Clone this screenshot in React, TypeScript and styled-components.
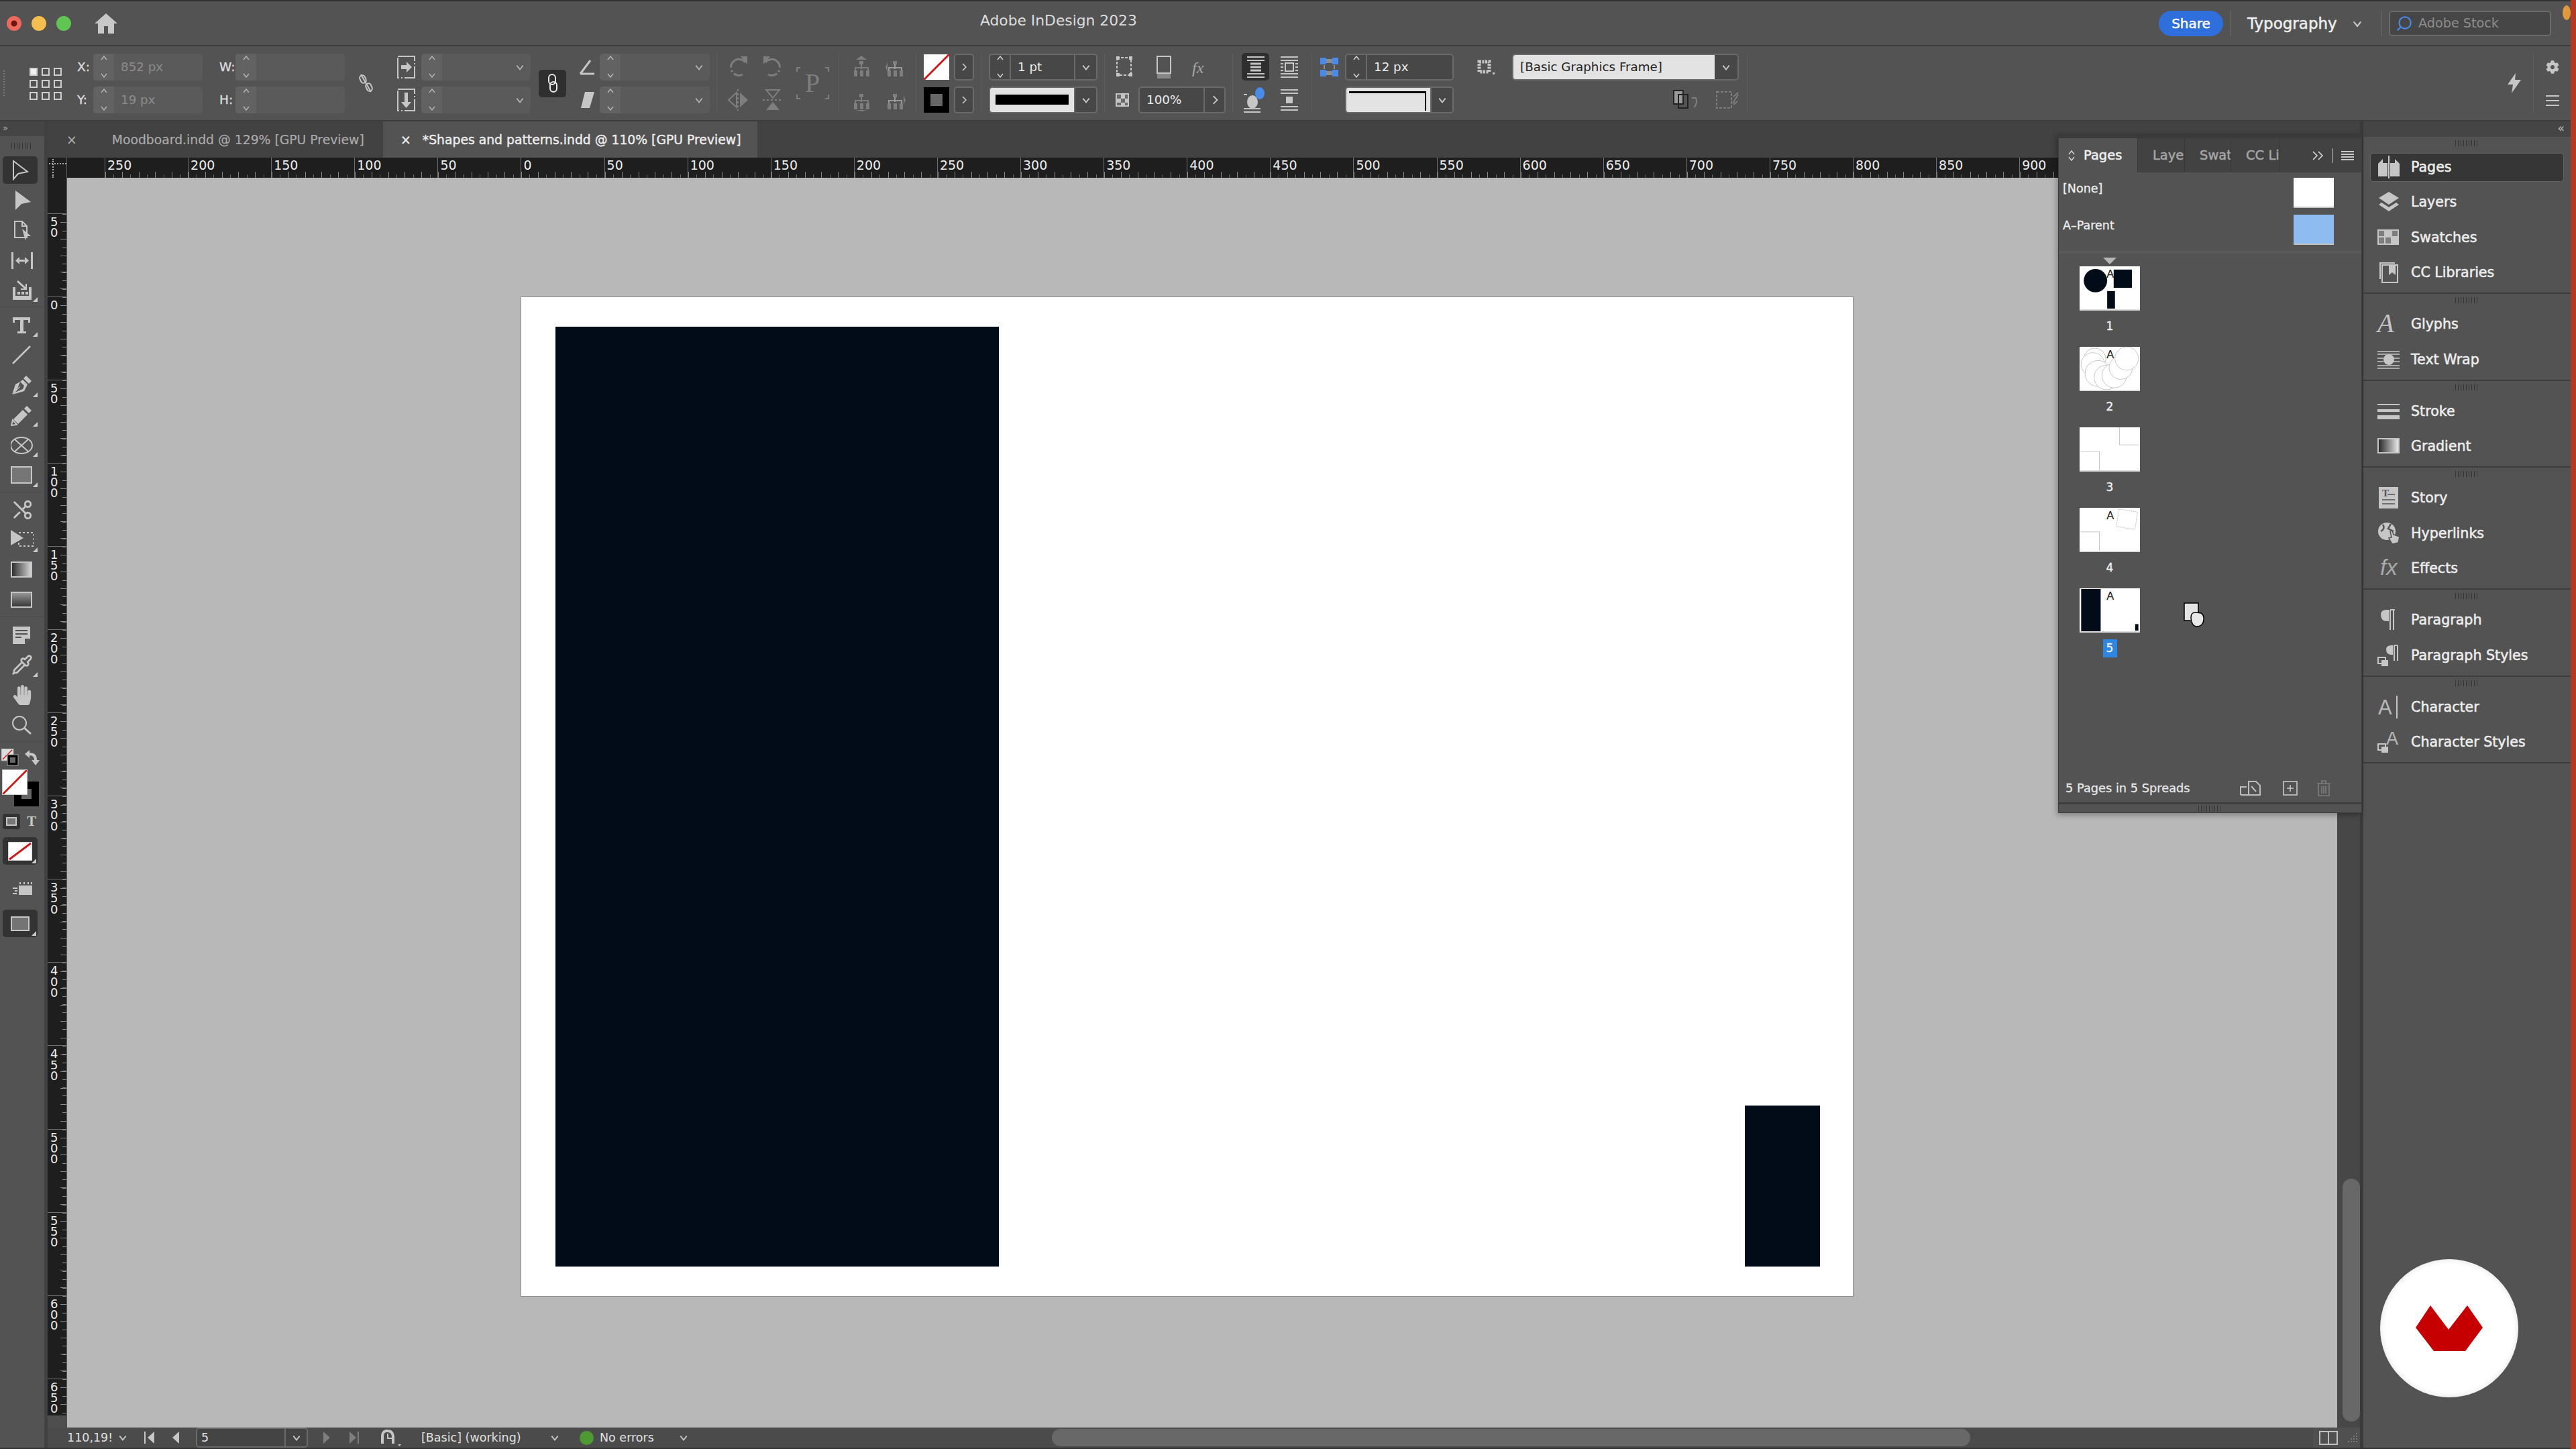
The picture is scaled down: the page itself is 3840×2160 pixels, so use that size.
import React from 'react';
import styled, { createGlobalStyle } from 'styled-components';
import { FaCog, FaHandPaper } from 'react-icons/fa';
import { Pipette, Scissors, Search } from 'lucide-react';

const ICON = '#c6c6c6';

const GlobalStyle = createGlobalStyle`
  html, body { margin: 0; padding: 0; background: #333; }
  * { box-sizing: border-box; }
  body { font-family: "DejaVu Sans", "Liberation Sans", sans-serif; color: #e6e6e6; }
`;

const Screen = styled.div`
  width: 3840px;
  height: 2160px;
  display: flex;
  overflow: hidden;
  position: relative;
`;
const RedEdge = styled.div`
  width: 8px;
  background: #b53a22;
`;
const AppWindow = styled.div`
  width: 3832px;
  display: flex;
  flex-direction: column;
  background: #333;
  padding: 2px 0;
`;
const OrangeDot = styled.div`
  position: absolute;
  right: 8px;
  top: 8px;
  width: 12px;
  height: 22px;
  border-radius: 50%;
  background: #e09a3c;
`;

/* title bar */
const TitleBar = styled.div`
  height: 67px;
  flex: none;
  display: flex;
  align-items: center;
  background: #535353;
  border-bottom: 2px solid #3b3b3b;
  padding-left: 10px;
`;
const Light = styled.div<{ $c: string; $dot?: boolean }>`
  width: 22px;
  height: 22px;
  border-radius: 50%;
  margin-right: 15px;
  background: ${(p) => (p.$dot ? `radial-gradient(circle, #6d1510 0 4px, ${p.$c} 5px)` : p.$c)};
`;
const Home = styled.svg`
  margin-left: 20px;
  width: 34px;
  height: 30px;
  fill: #c8c8c8;
`;
const AppTitle = styled.div`
  margin-left: 1286px;
  font-size: 21.8px;
  color: #dcdcdc;
  margin-top: -8px;
  width: 1757px;
`;
const ShareBtn = styled.div`
  width: 96px;
  height: 38px;
  border-radius: 19px;
  background: #2e6fdc;
  color: #fff;
  font-size: 20px;
  -webkit-text-stroke: 0.5px #fff;
  display: flex;
  align-items: center;
  justify-content: center;
`;
const BarRule = styled.div<{ $ml: number }>`
  width: 2px;
  height: 38px;
  margin-left: ${(p) => p.$ml}px;
  background: #5e5e5e;
`;
const WorkspaceName = styled.div`
  margin-left: 24px;
  margin-right: 16px;
  width: 140px;
  font-size: 23px;
  white-space: nowrap;
  color: #eee;
  -webkit-text-stroke: 0.5px #eee;
`;
const SearchBox = styled.div`
  margin-left: 10px;
  width: 242px;
  height: 38px;
  border: 2px solid #6b6b6b;
  border-radius: 5px;
  background: #464646;
  display: flex;
  align-items: center;
  gap: 8px;
  padding-left: 8px;
  font-size: 19.2px;
  color: #8d8d8d;
`;
const SearchGlyph = styled(Search)`
  transform: scaleX(-1);
`;

/* control bar */
const ControlBar = styled.div`
  height: 112px;
  flex: none;
  display: flex;
  align-items: center;
  background: #535353;
  border-bottom: 2px solid #3b3b3b;
`;
const Stack = styled.div<{ $ml?: number; $w: number; $gap?: number }>`
  margin-left: ${(p) => p.$ml ?? 0}px;
  width: ${(p) => p.$w}px;
  flex: none;
  display: flex;
  flex-direction: column;
  gap: ${(p) => p.$gap ?? 9}px;
`;
const StackRow = styled.div<{ $gap?: number; $end?: boolean }>`
  height: 40px;
  display: flex;
  align-items: center;
  gap: ${(p) => p.$gap ?? 0}px;
  justify-content: ${(p) => (p.$end ? 'flex-end' : 'flex-start')};
`;
const Grid2 = styled.div<{ $ml: number; $cols: string; $gap: number }>`
  margin-left: ${(p) => p.$ml}px;
  flex: none;
  display: grid;
  grid-template-columns: ${(p) => p.$cols};
  grid-auto-rows: 40px;
  row-gap: 9px;
  column-gap: ${(p) => p.$gap}px;
  align-items: center;
  justify-items: center;
`;
const VRule = styled.div<{ $ml: number }>`
  margin-left: ${(p) => p.$ml}px;
  width: 1px;
  height: 88px;
  flex: none;
  background: #5c5c5c;
`;
const GripDots = styled.div`
  margin-left: 5px;
  width: 2px;
  height: 38px;
  border-left: 2px dotted #777;
  flex: none;
`;
const Proxy = styled.div`
  margin-left: 37px;
  width: 47px;
  height: 47px;
  flex: none;
  display: grid;
  grid-template-columns: repeat(3, 11px);
  grid-auto-rows: 11px;
  gap: 7px 7px;
`;
const ProxyDot = styled.div<{ $on?: boolean }>`
  width: 12px;
  height: 12px;
  border: 2px solid #cfcfcf;
  background: ${(p) => (p.$on ? '#f2f2f2' : 'transparent')};
`;
const FieldLabel = styled.span`
  width: 24px;
  font-size: 18.5px;
  color: #dedede;
  -webkit-text-stroke: 0.3px #dedede;
`;
const Field = styled.div<{ $dim?: boolean }>`
  height: 40px;
  flex: 1;
  display: flex;
  align-items: stretch;
  border-radius: 5px;
  overflow: hidden;
  font-size: 18.3px;
  border: ${(p) => (p.$dim ? 'none' : '2px solid #6a6a6a')};
  background: ${(p) => (p.$dim ? '#5a5a5a' : '#474747')};
  color: ${(p) => (p.$dim ? '#8c8c8c' : '#ececec')};
`;
const SpinBox = styled.div<{ $dim?: boolean }>`
  width: 31px;
  flex: none;
  display: flex;
  flex-direction: column;
  align-items: center;
  justify-content: center;
  gap: 13px;
  background: ${(p) => (p.$dim ? '#626262' : 'transparent')};
  border-right: ${(p) => (p.$dim ? 'none' : '2px solid #6a6a6a')};
`;
const FieldValue = styled.div<{ $light?: boolean; $pad?: number }>`
  flex: 1;
  display: flex;
  align-items: center;
  padding-left: ${(p) => p.$pad ?? 10}px;
  white-space: nowrap;
  background: ${(p) => (p.$light ? '#e3e3e3' : 'transparent')};
  color: ${(p) => (p.$light ? '#222' : 'inherit')};
`;
const DropCap = styled.div<{ $line?: boolean; $w?: number }>`
  width: ${(p) => p.$w ?? 33}px;
  flex: none;
  display: flex;
  align-items: center;
  justify-content: center;
  border-left: ${(p) => (p.$line ? '2px solid #6a6a6a' : 'none')};
`;
const DarkBtn = styled.div<{ $ml?: number; $w: number; $h: number }>`
  margin-left: ${(p) => p.$ml ?? 0}px;
  width: ${(p) => p.$w}px;
  height: ${(p) => p.$h}px;
  flex: none;
  border-radius: 5px;
  background: #2f2f2f;
  display: flex;
  align-items: center;
  justify-content: center;
`;
const Slot = styled.div<{ $ml: number; $w: number }>`
  margin-left: ${(p) => p.$ml}px;
  width: ${(p) => p.$w}px;
  flex: none;
  display: flex;
  justify-content: center;
`;
const Swatch = styled.div`
  width: 38px;
  height: 38px;
  flex: none;
`;
const ArrowBtn = styled.div`
  width: 30px;
  height: 40px;
  border: 2px solid #6a6a6a;
  border-radius: 5px;
  background: #474747;
  display: flex;
  align-items: center;
  justify-content: center;
`;
const BarRight = styled.div`
  margin-left: auto;
  display: flex;
  align-items: center;
  padding-right: 17px;
`;
const StrokeSample = styled.div`
  flex: 1;
  background: #e3e3e3;
  display: flex;
  align-items: center;
  padding: 0 8px;
`;
const StrokeBar = styled.div`
  width: 100%;
  height: 15px;
  background: #000;
`;
const CornerSample = styled.div`
  flex: 1;
  background: #e3e3e3;
  padding: 5px 6px 2px 4px;
`;
const CornerLine = styled.div`
  height: 100%;
  border-top: 3px solid #000;
  border-right: 2px solid #000;
`;
const IcoSvg = styled.svg<{ $dim?: boolean }>`
  flex: none;
  display: block;
  fill: ${(p) => (p.$dim ? '#7e7e7e' : ICON)};
  stroke: none;
`;
const ChevSvg = styled.svg`
  flex: none;
  fill: none;
  stroke-width: 1.6;
`;
const NudgeLeft = styled.svg`
  margin-left: -3px;
`;
const BurgerTall = styled.div`
  width: 20px;
  height: 17px;
  background: repeating-linear-gradient(180deg, #c8c8c8 0 2.5px, transparent 2.5px 7px);
`;

/* workspace */
const Workspace = styled.div`
  flex: 1;
  min-height: 0;
  display: flex;
  position: relative;
  background: #3a3a3a;
`;
const ToolPanel = styled.div`
  width: 71px;
  flex: none;
  background: #535353;
  border-right: 5px solid #414141;
  display: flex;
  flex-direction: column;
`;
const ToolHead = styled.div`
  height: 22px;
  background: #454545;
  color: #b0b0b0;
  font-size: 13px;
  padding-left: 4px;
  line-height: 20px;
`;
const GripBars = styled.div<{ $h?: number }>`
  height: ${(p) => p.$h ?? 28}px;
  flex: none;
  display: flex;
  align-items: center;
  justify-content: center;
  &::before {
    content: '';
    width: 36px;
    height: 9px;
    background: repeating-linear-gradient(90deg, #333 0 1.5px, transparent 1.5px 4px);
  }
`;
const ToolGrip = styled(GripBars)`
  &::before { width: 32px; }
`;
const ToolGroup = styled.div`
  border-bottom: 1px solid #4b4b4b;
  padding-bottom: 2px;
  margin-bottom: 4px;
`;
const Tool = styled.div<{ $more?: boolean }>`
  height: 44.8px;
  display: flex;
  align-items: center;
  justify-content: center;
  position: relative;
  color: ${ICON};
  &::after {
    content: '';
    display: ${(p) => (p.$more ? 'block' : 'none')};
    position: absolute;
    right: 10px;
    bottom: 5px;
    border-style: solid;
    border-width: 0 0 7px 7px;
    border-color: transparent transparent #ccc transparent;
  }
`;
const SelectedTool = styled(Tool)`
  background: #333;
  border-radius: 5px;
  margin: 2px 10px 2px 4px;
  height: 41px;
`;
const FlippedScissors = styled(Scissors)`
  transform: scaleX(-1);
`;
const ColorArea = styled.div`
  height: 99px;
  position: relative;
`;
const SmallDefault = styled.svg`
  position: absolute;
  left: 2px;
  top: 6px;
`;
const SwapIcon = styled.svg`
  position: absolute;
  left: 37px;
  top: 8px;
`;
const BigFill = styled.div`
  position: absolute;
  left: 3px;
  top: 37px;
  width: 38px;
  height: 38px;
  z-index: 1;
  border: 1px solid #ccc;
`;
const BigStroke = styled.div`
  position: absolute;
  left: 21px;
  top: 55px;
  width: 37px;
  height: 37px;
  border: 11px solid #000;
  background: #666;
`;
const FormatRow = styled.div`
  height: 30px;
  display: flex;
  align-items: center;
  padding-left: 4px;
`;
const FormatBtn = styled.div`
  width: 26px;
  height: 23px;
  border-radius: 4px;
  background: #333;
  display: flex;
  align-items: center;
  justify-content: center;
`;
const FormatBox = styled.div`
  width: 16px;
  height: 13px;
  border: 2px solid #c4c4c4;
  background: #777;
`;
const FormatT = styled.span`
  margin-left: 10px;
  font-family: "Liberation Serif", serif;
  font-weight: 700;
  font-size: 21px;
  color: #c8c8c8;
`;
const WideBtn = styled.div<{ $mt: number }>`
  height: 41px;
  margin: ${(p) => p.$mt}px 10px 0 4px;
  border-radius: 5px;
  background: #333;
  display: flex;
  align-items: center;
  justify-content: center;
  position: relative;
  &::after {
    content: '';
    position: absolute;
    right: 2px;
    bottom: 2px;
    border-style: solid;
    border-width: 0 0 7px 7px;
    border-color: transparent transparent #ccc transparent;
  }
`;
const ModeBtn = styled(Tool)`
  margin-top: 15px;
  height: 40px;
`;

const Main = styled.div`
  width: 3447px;
  flex: none;
  display: flex;
  flex-direction: column;
`;
const TabBar = styled.div`
  height: 54px;
  flex: none;
  display: flex;
  background: #424242;
`;
const DocTab = styled.div<{ $active?: boolean; $w: number; $pad: number; $gap: number }>`
  width: ${(p) => p.$w}px;
  padding-left: ${(p) => p.$pad}px;
  gap: ${(p) => p.$gap}px;
  display: flex;
  align-items: center;
  font-size: 18.8px;
  white-space: nowrap;
  background: ${(p) => (p.$active ? '#535353' : '#424242')};
  color: ${(p) => (p.$active ? '#ededed' : '#aaa')};
  -webkit-text-stroke: ${(p) => (p.$active ? '0.4px #ededed' : '0.2px #aaa')};
`;
const RulerRow = styled.div`
  height: 30px;
  flex: none;
  display: flex;
  background: #1e1e1e;
`;
const RulerCorner = styled.div`
  width: 29px;
  flex: none;
  position: relative;
  border-right: 1px solid #5c5c5c;
  &::before {
    content: '';
    position: absolute;
    left: 2px;
    right: 0;
    top: 8px;
    border-top: 2px dotted #aaa;
  }
  &::after {
    content: '';
    position: absolute;
    left: 7px;
    top: 2px;
    bottom: 0;
    border-left: 2px dotted #aaa;
  }
`;
const HRuler = styled.div`
  flex: 1;
  display: flex;
  overflow: hidden;
  padding-left: 56px;
`;
const HCell = styled.div`
  width: 124.1px;
  flex: none;
  border-left: 1px solid #707070;
  padding-left: 3px;
  font-size: 19px;
  line-height: 22px;
  color: #ededed;
  background:
    repeating-linear-gradient(90deg, #888 0 1px, transparent 1px 24.82px) 0 100% / 100% 9px no-repeat,
    repeating-linear-gradient(90deg, #666 0 1px, transparent 1px 12.41px) 0 100% / 100% 5px no-repeat;
`;
const CanvasRow = styled.div`
  flex: 1;
  min-height: 0;
  display: flex;
`;
const VRulerCol = styled.div`
  width: 29px;
  flex: none;
  display: flex;
  flex-direction: column;
`;
const VRuler = styled.div`
  height: 1845px;
  background: #1e1e1e;
  overflow: hidden;
  padding-top: 52.5px;
  border-right: 1px solid #5c5c5c;
`;
const VRulerFoot = styled.div`
  flex: 1;
  background: #4e4e4e;
`;
const VCell = styled.div`
  height: 124.1px;
  border-top: 1px solid #707070;
  padding: 4px 0 0 4px;
  display: flex;
  flex-direction: column;
  font-size: 18px;
  line-height: 16.2px;
  color: #ededed;
  background:
    repeating-linear-gradient(180deg, #888 0 1px, transparent 1px 24.82px) 100% 12.41px / 9px 100% no-repeat,
    repeating-linear-gradient(180deg, #888 0 1px, transparent 1px 12.41px) 100% 0 / 6px 100% no-repeat;
`;
const Canvas = styled.div`
  flex: 1;
  background: #b8b8b8;
  padding: 178px 0 0 677px;
`;
const Page = styled.div`
  width: 1985px;
  height: 1489px;
  background: #fff;
  outline: 1px solid #8a8a8a;
  padding: 44px 49px 44px 51px;
  display: flex;
  justify-content: space-between;
  align-items: flex-end;
`;
const DarkShape = styled.div<{ $w: number; $h: number }>`
  width: ${(p) => p.$w}px;
  height: ${(p) => p.$h}px;
  background: #020c19;
`;
const VScroll = styled.div`
  width: 34px;
  flex: none;
  background: #474747;
  display: flex;
  flex-direction: column;
  align-items: flex-end;
  justify-content: flex-end;
  padding-bottom: 9px;
`;
const VThumb = styled.div`
  width: 26px;
  height: 362px;
  border-radius: 13px;
  background: #686868;
`;

/* status bar */
const StatusBar = styled.div`
  height: 30px;
  flex: none;
  display: flex;
  align-items: center;
  background: #4b4b4b;
  font-size: 17.5px;
  color: #e0e0e0;
`;
const StatusItem = styled.div<{ $ml: number; $w?: number }>`
  margin-left: ${(p) => p.$ml}px;
  width: ${(p) => (p.$w ? `${p.$w}px` : 'auto')};
  flex: none;
  display: flex;
  align-items: center;
  white-space: nowrap;
`;
const PageField = styled.div`
  margin-left: 24px;
  width: 167px;
  height: 30px;
  flex: none;
  display: flex;
  align-items: stretch;
  border: 2px solid #6a6a6a;
  border-radius: 5px;
  background: #444;
`;
const GreenDot = styled.div`
  margin-left: 30px;
  width: 21px;
  height: 21px;
  flex: none;
  border-radius: 50%;
  background: #4d9a33;
`;
const HThumb = styled.div`
  margin-left: 542px;
  width: 1369px;
  height: 26px;
  flex: none;
  border-radius: 13px;
  background: #686868;
`;
const StatusCorner = styled.div`
  margin-left: auto;
  width: 70px;
  height: 30px;
  flex: none;
  background: #505050;
  display: flex;
  align-items: center;
  padding-left: 9px;
  gap: 12px;
`;
const SplitIcon = styled.div`
  width: 28px;
  height: 21px;
  flex: none;
  border: 2px solid #c0c0c0;
  background: linear-gradient(90deg, transparent 11px, #c0c0c0 11px 13px, transparent 13px);
`;

/* dock */
const DockGap = styled.div`
  width: 5px;
  flex: none;
  background: #3a3a3a;
`;
const Dock = styled.div`
  flex: 1;
  display: flex;
  flex-direction: column;
  background: #535353;
`;
const DockHead = styled.div`
  height: 23px;
  flex: none;
  background: #454545;
  color: #bbb;
  font-size: 17px;
  line-height: 20px;
  text-align: right;
  padding-right: 9px;
`;
const DockGroup = styled.div<{ $top: number }>`
  flex: none;
  display: flex;
  flex-direction: column;
  border-bottom: 2px solid #3d3d3d;
  padding-bottom: 4px;
  & > ${GripBars} { height: ${(p) => p.$top}px; }
`;
const DockRow = styled.div<{ $active?: boolean }>`
  height: 43px;
  flex: none;
  margin: 4.65px 10px;
  padding-left: 10px;
  display: flex;
  align-items: center;
  gap: 16px;
  border-radius: 5px;
  border: ${(p) => (p.$active ? '1px solid #636363' : '1px solid transparent')};
  background: ${(p) => (p.$active ? '#363636' : 'transparent')};
  font-size: 20.6px;
  color: #ececec;
  -webkit-text-stroke: 0.55px #ececec;
  white-space: nowrap;
`;
const DockGlyph = styled.svg`
  width: 34px;
  height: 34px;
  flex: none;
  overflow: visible;
  fill: ${ICON};
  -webkit-text-stroke: 0;
`;

/* pages panel, floating over the canvas */
const PagesPanel = styled.div`
  position: absolute;
  left: 3068px;
  top: 18px;
  width: 453px;
  height: 1013px;
  display: flex;
  flex-direction: column;
  background: #535353;
  border-left: 1px solid #3d3d3d;
  border-right: 1px solid #3d3d3d;
  border-bottom: 1px solid #3d3d3d;
  box-shadow: -2px 3px 8px rgba(0, 0, 0, 0.3);
`;
const PanelStrip = styled.div`
  height: 7px;
  flex: none;
  background: #3a3a3a;
`;
const PanelTabs = styled.div`
  height: 51px;
  flex: none;
  display: flex;
  background: #424242;
  font-size: 19.5px;
  -webkit-text-stroke: 0.5px currentColor;
`;
const PanelTab = styled.div<{ $w: number; $active?: boolean }>`
  width: ${(p) => p.$w}px;
  flex: none;
  overflow: hidden;
  display: flex;
  align-items: center;
  white-space: nowrap;
  padding-left: ${(p) => (p.$active ? 14 : 22)}px;
  gap: 13px;
  background: ${(p) => (p.$active ? '#535353' : '#424242')};
  color: ${(p) => (p.$active ? '#efefef' : '#a6a6a6')};
  border-right: 1px solid #383838;
`;
const PanelTools = styled.div`
  margin-left: auto;
  display: flex;
  align-items: center;
  padding-right: 11px;
  gap: 12px;
  color: #d8d8d8;
  -webkit-text-stroke: 0;
`;
const TabsRule = styled.div`
  width: 1px;
  height: 22px;
  background: #c0c0c0;
`;
const Hamburger = styled.div`
  width: 19px;
  height: 14px;
  background: repeating-linear-gradient(180deg, #c8c8c8 0 2px, transparent 2px 4px);
`;
const Parents = styled.div`
  flex: none;
  padding: 8px 0 9px;
  display: flex;
  flex-direction: column;
  gap: 10px;
  border-bottom: 4px solid #5b5b5b;
`;
const ParentRow = styled.div`
  height: 45px;
  display: flex;
  padding-left: 6px;
  font-size: 17.5px;
  color: #ededed;
  -webkit-text-stroke: 0.3px #ededed;
  align-items: flex-start;
  justify-content: space-between;
  padding-right: 41px;
`;
const ParentName = styled.span`
  margin-top: 6px;
`;
const ParentThumb = styled.div<{ $c: string }>`
  width: 60px;
  height: 45px;
  background: ${(p) => p.$c};
  border-bottom: 2px solid #c2c2c2;
`;
const PageList = styled.div`
  flex: 1;
  padding: 6px 0 0 31px;
  position: relative;
`;
const Triangle = styled.div`
  width: 0;
  margin: 0 0 3px 35px;
  border-style: solid;
  border-width: 10px 10px 0 10px;
  border-color: #b6b6b6 transparent transparent transparent;
`;
const PageTile = styled.div`
  width: 90px;
  height: 120px;
`;
const Thumb = styled.svg`
  display: block;
  width: 90px;
  height: 66px;
  background: #fff;
  border-bottom: 2px solid #ddd;
`;
const PageNum = styled.div<{ $on?: boolean }>`
  margin: 10px auto 0;
  width: 84px;
  height: 27px;
  line-height: 27px;
  text-align: center;
  font-size: 17px;
  color: #efefef;
  -webkit-text-stroke: 0.4px #efefef;
  & > span {
    display: inline-block;
    width: 21px;
    background: ${(p) => (p.$on ? '#2f86e0' : 'transparent')};
  }
`;
const DragCursor = styled.svg`
  position: absolute;
  left: 186px;
  top: 520px;
`;
const PanelFoot = styled.div`
  height: 46px;
  flex: none;
  display: flex;
  align-items: center;
  padding-left: 10px;
  font-size: 17.8px;
  color: #e6e6e6;
  -webkit-text-stroke: 0.3px #e6e6e6;
  border-bottom: 3px solid #3d3d3d;
`;
const FootIcons = styled.div`
  margin-left: 74px;
  display: flex;
  align-items: center;
  gap: 28px;
`;

/* watermark logo */
const Watermark = styled.div`
  position: absolute;
  left: 3548px;
  top: 1877px;
  width: 206px;
  height: 206px;
  border-radius: 50%;
  background: #fff;
  box-shadow: inset 0 0 10px rgba(0, 0, 0, 0.12);
  display: flex;
  align-items: center;
  justify-content: center;
`;
const GradientDefs = styled.svg`
  position: absolute;
`;

const Chev = ({ dir, c = '#c8c8c8', s = 12 }: { dir: 'up' | 'down' | 'right' | 'left'; c?: string; s?: number }) => {
  const d = { up: 'M2 8 L6 3 L10 8', down: 'M2 4 L6 9 L10 4', right: 'M4 1 L9 6 L4 11', left: 'M8 1 L3 6 L8 11' }[dir];
  return (
    <ChevSvg width={s} height={s} viewBox="0 0 12 12" stroke={c}>
      <path d={d} />
    </ChevSvg>
  );
};

const Spin = ({ dim }: { dim?: boolean }) => (
  <SpinBox $dim={dim}>
    <Chev dir="up" c={dim ? '#b0b0b0' : '#ccc'} />
    <Chev dir="down" c={dim ? '#b0b0b0' : '#ccc'} />
  </SpinBox>
);

const Ico = ({ w, h, children, dim }: { w: number; h: number; children: React.ReactNode; dim?: boolean }) => (
  <IcoSvg width={w} height={h} viewBox={`0 0 ${w} ${h}`} $dim={dim}>
    {children}
  </IcoSvg>
);
const line = { fill: 'none', stroke: ICON, strokeWidth: 2 };
const dimLine = { fill: 'none', stroke: '#7e7e7e', strokeWidth: 2 };

const DimCombo = () => (
  <Field $dim>
    <Spin dim />
    <FieldValue />
    <DropCap>
      <Chev dir="down" c="#b0b0b0" s={14} />
    </DropCap>
  </Field>
);

const NoneSwatch = ({ size }: { size: number }) => (
  <svg width={size} height={size} viewBox="0 0 38 38" display="block">
    <rect width="38" height="38" fill="#fff" />
    <path d="M0 38 L38 0" stroke="#cc1a1a" strokeWidth="3" />
  </svg>
);

const Controls = () => (
  <ControlBar>
    <GripDots />
    <Proxy>
      {Array.from({ length: 9 }).map((_, i) => (
        <ProxyDot key={i} $on={i === 0} />
      ))}
    </Proxy>
    <Stack $ml={24} $w={187}>
      <StackRow>
        <FieldLabel>X:</FieldLabel>
        <Field $dim>
          <Spin dim />
          <FieldValue>852 px</FieldValue>
        </Field>
      </StackRow>
      <StackRow>
        <FieldLabel>Y:</FieldLabel>
        <Field $dim>
          <Spin dim />
          <FieldValue>19 px</FieldValue>
        </Field>
      </StackRow>
    </Stack>
    <Stack $ml={25} $w={187}>
      <StackRow>
        <FieldLabel>W:</FieldLabel>
        <Field $dim>
          <Spin dim />
        </Field>
      </StackRow>
      <StackRow>
        <FieldLabel>H:</FieldLabel>
        <Field $dim>
          <Spin dim />
        </Field>
      </StackRow>
    </Stack>
    <Slot $ml={19} $w={25}>
      <Ico w={25} h={30}>
        <path d="M5 2 L20 28" {...line} />
        <rect x="4" y="3" width="8" height="12" rx="4" transform="rotate(-25 8 9)" {...line} />
        <rect x="13" y="15" width="8" height="12" rx="4" transform="rotate(-25 17 21)" {...line} />
      </Ico>
    </Slot>
    <Stack $ml={34} $w={28}>
      <StackRow>
        <Ico w={28} h={34}>
          <rect x="1" y="1" width="25" height="32" {...line} strokeDasharray="32 3 2 3" />
          <path d="M6 14 H14 V9 L22 17 L14 25 V20 H6Z" />
        </Ico>
      </StackRow>
      <StackRow>
        <Ico w={28} h={34}>
          <rect x="1" y="1" width="25" height="32" {...line} strokeDasharray="32 3 2 3" />
          <path d="M11 6 H16 V20 H21 L13.5 29 L6 20 H11Z" />
        </Ico>
      </StackRow>
    </Stack>
    <Stack $ml={8} $w={163}>
      <StackRow>
        <DimCombo />
      </StackRow>
      <StackRow>
        <DimCombo />
      </StackRow>
    </Stack>
    <DarkBtn $ml={12} $w={41} $h={41}>
      <Ico w={18} h={30}>
        <rect x="3" y="2" width="10" height="15" rx="5" {...line} stroke="#e8e8e8" />
        <rect x="5" y="13" width="10" height="15" rx="5" {...line} stroke="#e8e8e8" />
      </Ico>
    </DarkBtn>
    <Stack $ml={18} $w={30}>
      <StackRow>
        <Ico w={30} h={26}>
          <path d="M3 23 H24 M3 23 L18 3" {...line} strokeWidth={3} />
        </Ico>
      </StackRow>
      <StackRow>
        <Ico w={30} h={26}>
          <path d="M10 1 H24 L17 25 H4Z" />
        </Ico>
      </StackRow>
    </Stack>
    <Stack $ml={2} $w={164}>
      <StackRow>
        <DimCombo />
      </StackRow>
      <StackRow>
        <DimCombo />
      </StackRow>
    </Stack>
    <VRule $ml={10} />
    <Grid2 $ml={16} $cols="31px 31px" $gap={20}>
      <Ico w={31} h={36} dim>
        <path d="M26 11 A12 12 0 1 0 22 29" {...dimLine} strokeDasharray="30 4 3 3" strokeWidth={3} />
        <path d="M19 2 L29 2 L29 14Z" />
      </Ico>
      <Ico w={31} h={36} dim>
        <path d="M5 11 A12 12 0 1 1 9 29" {...dimLine} strokeDasharray="30 4 3 3" strokeWidth={3} />
        <path d="M12 2 L2 2 L2 14Z" />
      </Ico>
      <Ico w={31} h={34} dim>
        <path d="M13 6 L1 17 L13 28Z" {...dimLine} />
        <path d="M15 1 V33" {...dimLine} strokeDasharray="3 3" />
        <path d="M18 6 L30 17 L18 28Z" />
      </Ico>
      <Ico w={31} h={34} dim>
        <path d="M6 2 H26 L16 14Z" {...dimLine} />
        <path d="M1 17 H30" {...dimLine} strokeDasharray="3 3" />
        <path d="M6 32 H26 L16 20Z" />
      </Ico>
    </Grid2>
    <Slot $ml={20} $w={49}>
      <svg width="49" height="48" viewBox="0 0 49 48" fill="none" stroke="#7e7e7e" strokeWidth="2">
        <path d="M1 7 V1 H6 M43 1 H48 V7 M1 41 V47 H6 M43 47 H48 V41" />
        <text x="13" y="37" fontFamily="Liberation Serif, serif" fontSize="40" fill="#7e7e7e" stroke="none">
          P
        </text>
      </svg>
    </Slot>
    <VRule $ml={14} />
    <Grid2 $ml={19} $cols="30px 30px" $gap={20}>
      {[0, 1, 2, 3].map((i) => (
        <Ico key={i} w={30} h={34} dim>
          <rect x="11" y="8" width="6" height="5" />
          <rect x="3" y="22" width="5" height="9" />
          <rect x="12" y="22" width="5" height="9" />
          <rect x="21" y="22" width="5" height="9" />
          <path d="M14 12 V20 M5 22 V18 H24 V22" {...dimLine} stroke={i === 1 || i === 3 ? '#9a9a9a' : '#7e7e7e'} />
          {i === 0 && <path d="M14 0 L22 6 H6Z" />}
          {i === 2 && <path d="M14 34 L22 32 H6Z" />}
          {i === 1 && <path d="M0 17 L3 10 V24Z" />}
          {i === 3 && <path d="M30 17 L27 10 V24Z" />}
        </Ico>
      ))}
    </Grid2>
    <VRule $ml={15} />
    <Stack $ml={11} $w={75}>
      <StackRow $gap={7}>
        <Swatch>
          <NoneSwatch size={38} />
        </Swatch>
        <ArrowBtn>
          <Chev dir="right" />
        </ArrowBtn>
      </StackRow>
      <StackRow $gap={7}>
        <Swatch>
          <svg width="38" height="38" viewBox="0 0 38 38">
            <rect width="38" height="38" fill="#000" />
            <rect x="10" y="10" width="18" height="18" fill="#666" />
          </svg>
        </Swatch>
        <ArrowBtn>
          <Chev dir="right" />
        </ArrowBtn>
      </StackRow>
    </Stack>
    <VRule $ml={10} />
    <Stack $ml={11} $w={162}>
      <StackRow>
        <Field>
          <Spin />
          <FieldValue>1 pt</FieldValue>
          <DropCap $line>
            <Chev dir="down" s={14} />
          </DropCap>
        </Field>
      </StackRow>
      <StackRow>
        <Field>
          <StrokeSample>
            <StrokeBar />
          </StrokeSample>
          <DropCap $line>
            <Chev dir="down" s={14} />
          </DropCap>
        </Field>
      </StackRow>
    </Stack>
    <VRule $ml={10} />
    <Stack $ml={16} $w={164}>
      <StackRow $gap={30}>
        <Ico w={30} h={34}>
          <rect x="2" y="3" width="21" height="26" {...line} strokeDasharray="4 2" />
          <rect x="1" y="1" width="5" height="5" />
          <rect x="20" y="1" width="5" height="5" />
          <rect x="1" y="26" width="5" height="5" />
          <rect x="20" y="26" width="5" height="5" />
        </Ico>
        <Ico w={24} h={36}>
          <rect x="2" y="2" width="20" height="25" {...line} />
          <rect x="2" y="28" width="20" height="7" fill="#888" />
        </Ico>
        <svg width="30" height="36" viewBox="0 0 30 36">
          <text x="0" y="27" fontFamily="Liberation Serif, serif" fontStyle="italic" fontSize="24" fill="#a8a8a8">
            fx
          </text>
        </svg>
      </StackRow>
      <StackRow $gap={14}>
        <svg width="20" height="20" viewBox="0 0 20 20">
          <rect width="20" height="20" fill="#c4c4c4" />
          <path d="M2 2 H8 V8 H2Z M8 8 H14 V14 H8Z M14 2 H18 V8 H14Z M2 14 H8 V18 H2Z M14 14 H18 V18 H14Z" fill="#6a6a6a" />
        </svg>
        <Field>
          <FieldValue>100%</FieldValue>
          <DropCap $line $w={31}>
            <Chev dir="right" s={14} />
          </DropCap>
        </Field>
      </StackRow>
    </Stack>
    <VRule $ml={10} />
    <Grid2 $ml={13} $cols="41px 28px" $gap={16}>
      <DarkBtn $w={41} $h={41}>
        <Ico w={28} h={34}>
          <path d="M1 2 H27 M1 7 H27 M1 27 H27 M1 32 H27" {...line} />
          <path d="M6 12 H22 M6 17 H22 M6 22 H22" {...line} strokeWidth={3} />
        </Ico>
      </DarkBtn>
      <Ico w={28} h={34}>
        <path d="M1 2 H27 M1 7 H27 M1 27 H27 M1 32 H27" {...line} />
        <rect x="8" y="11" width="12" height="12" {...line} />
        <path d="M1 12 H5 M1 17 H5 M1 22 H5 M23 12 H27 M23 17 H27 M23 22 H27" {...line} />
      </Ico>
      <NudgeLeft width="34" height="40" viewBox="0 0 34 40">
        <path d="M1 38 H26 M1 33 H26 M1 12 H6 M21 12 H26" stroke={ICON} strokeWidth="2" />
        <ellipse cx="14" cy="23" rx="8" ry="10" fill="#c6c6c6" />
        <ellipse cx="25" cy="10" rx="7" ry="9" fill="#4a8ae8" />
      </NudgeLeft>
      <Ico w={28} h={34}>
        <path d="M1 2 H27 M1 7 H27 M1 27 H27 M1 32 H27" {...line} />
        <rect x="9" y="12" width="10" height="10" />
      </Ico>
    </Grid2>
    <VRule $ml={19} />
    <Stack $ml={12} $w={27}>
      <StackRow>
        <svg width="27" height="28" viewBox="0 0 27 28">
          <rect x="0" y="0" width="9" height="10" fill="#4a8ae8" />
          <rect x="18" y="0" width="9" height="10" fill="#4a8ae8" />
          <rect x="0" y="18" width="9" height="10" fill="#4a8ae8" />
          <rect x="18" y="18" width="9" height="10" fill="#4a8ae8" />
          <rect x="9" y="2" width="9" height="6" fill="#8c8c8c" />
          <rect x="9" y="20" width="9" height="6" fill="#8c8c8c" />
          <path d="M6 11 V17 M21 11 V17" stroke="#8c8c8c" strokeWidth="2" />
        </svg>
      </StackRow>
      <StackRow />
    </Stack>
    <Stack $ml={10} $w={162}>
      <StackRow>
        <Field>
          <Spin />
          <FieldValue>12 px</FieldValue>
        </Field>
      </StackRow>
      <StackRow>
        <Field>
          <CornerSample>
            <CornerLine />
          </CornerSample>
          <DropCap $line>
            <Chev dir="down" s={14} />
          </DropCap>
        </Field>
      </StackRow>
    </Stack>
    <Stack $ml={35} $w={30}>
      <StackRow>
        <Ico w={26} h={22}>
          <rect x="3" y="3" width="15" height="15" {...line} strokeWidth={5} strokeDasharray="3 1.5" />
          <rect x="23" y="19" width="3" height="3" />
        </Ico>
      </StackRow>
      <StackRow />
    </Stack>
    <Stack $ml={22} $w={338}>
      <StackRow>
        <Field>
          <FieldValue $light>[Basic Graphics Frame]</FieldValue>
          <DropCap $w={34}>
            <Chev dir="down" s={14} />
          </DropCap>
        </Field>
      </StackRow>
      <StackRow $end $gap={26}>
        <Ico w={38} h={30} dim>
          <rect x="1" y="1" width="14" height="20" fill="#9a9a9a" stroke="#222" strokeWidth="2" />
          <rect x="8" y="7" width="14" height="20" fill="none" stroke="#222" strokeWidth="2" />
          <path d="M28 12 H34 Q37 20 31 26" {...dimLine} />
        </Ico>
        <Ico w={34} h={26} dim>
          <rect x="1" y="1" width="22" height="24" {...dimLine} strokeDasharray="4 2" />
          <path d="M26 8 L33 2 M25 18 L33 5 M26 20 L32 15" {...dimLine} />
        </Ico>
      </StackRow>
    </Stack>
    <VRule $ml={12} />
    <BarRight>
      <Ico w={22} h={30}>
        <path d="M13 0 L1 17 H9 L7 30 L21 10 H12Z" />
      </Ico>
      <VRule $ml={17} />
      <Stack $ml={18} $w={20} $gap={32}>
        <FaCog size={20} color={ICON} />
        <BurgerTall />
      </Stack>
    </BarRight>
  </ControlBar>
);

const ToolIcons = {
  direct: <path d="M7 2 V31 L16 22 L30 19Z" />,
  page: (
    <>
      <path d="M6 3 H17 L24 10 V27 H6Z M17 3 V10 H24" {...line} />
      <path d="M17 14 L30 25 L23 25 L22 32Z" />
    </>
  ),
  gap: (
    <>
      <rect x="1" y="4" width="3" height="25" />
      <rect x="30" y="4" width="3" height="25" />
      <path d="M7 16.5 L13 11 V15 H21 V11 L27 16.5 L21 22 V18 H13 V22Z" />
    </>
  ),
  collect: (
    <>
      <path d="M3 11 H7 V24 H27 V11 H31 V30 H3Z" />
      <path d="M11 1 L22 11 V6 L24 6 V15 H15 V13 H20 L9 3Z" />
      <rect x="10" y="18" width="4" height="4" />
      <rect x="16" y="18" width="4" height="4" />
      <rect x="22" y="18" width="4" height="4" />
    </>
  ),
  type: <path d="M3 4 H29 V12 H26 V8 H19 V25 H23 V28 H10 V25 H14 V8 H6 V12 H3Z" />,
  line: <path d="M3 29 L29 3" {...line} strokeWidth={2.5} />,
  pen: (
    <>
      <path d="M23 2 L31 10 L27 14 L19 6Z" />
      <path d="M18 8 L25 15 L20 25 L3 30 L13 18 L14 19 L6 27 L18 22 L20 17 L14 11Z" />
      <path d="M14 11 L7 15 L2 30 L9 24Z" />
    </>
  ),
  pencil: (
    <>
      <path d="M24 2 L31 9 L27 13 L20 6Z" />
      <path d="M18 8 L25 15 L11 29 L4 22Z" />
      <path d="M3 23 L9 30 L1 31Z" {...line} />
    </>
  ),
  ellipse: (
    <>
      <ellipse cx="16" cy="16" rx="16" ry="12" {...line} strokeWidth={2} />
      <path d="M6 7 L26 25 M26 7 L6 25" {...line} />
    </>
  ),
  rect: <rect x="1" y="3" width="30" height="24" fill="#767676" stroke={ICON} strokeWidth="2" />,
  free: (
    <>
      <rect x="12" y="5" width="22" height="20" {...line} strokeDasharray="3 3" />
      <path d="M0 1 L19 13 L0 24Z" />
    </>
  ),
  gradient: <rect x="1" y="4" width="30" height="22" fill="url(#toolGrad)" stroke={ICON} strokeWidth="2" />,
  feather: <rect x="1" y="4" width="30" height="22" fill="url(#toolGradV)" stroke={ICON} strokeWidth="2" />,
  note: (
    <>
      <path d="M3 3 H29 V21 L21 29 H3Z" />
      <path d="M7 9 H25 M7 14 H25 M7 19 H16" stroke="#535353" strokeWidth="2" />
      <path d="M29 21 H21 V29" fill="#535353" />
    </>
  ),
  zoom: (
    <>
      <circle cx="13" cy="13" r="10" {...line} />
      <path d="M20 20 L30 29" {...line} strokeWidth={3} />
    </>
  ),
};

const SvgTool = ({ k, more }: { k: keyof typeof ToolIcons; more?: boolean }) => (
  <Tool $more={more}>
    <Ico w={34} h={32}>
      {ToolIcons[k]}
    </Ico>
  </Tool>
);

const Tools = () => (
  <ToolPanel>
    <ToolHead>&#187;</ToolHead>
    <ToolGrip />
    <ToolGroup>
      <SelectedTool>
        <Ico w={26} h={34}>
          <path d="M3 3 V30 L10 22 L24 19Z" {...line} />
        </Ico>
      </SelectedTool>
      <SvgTool k="direct" />
      <SvgTool k="page" />
      <SvgTool k="gap" />
      <SvgTool k="collect" more />
    </ToolGroup>
    <ToolGroup>
      <SvgTool k="type" more />
      <SvgTool k="line" />
      <SvgTool k="pen" more />
      <SvgTool k="pencil" more />
      <SvgTool k="ellipse" more />
      <SvgTool k="rect" more />
    </ToolGroup>
    <ToolGroup>
      <Tool>
        <FlippedScissors size={34} color={ICON} />
      </Tool>
      <SvgTool k="free" more />
      <SvgTool k="gradient" />
      <SvgTool k="feather" />
    </ToolGroup>
    <ToolGroup>
      <SvgTool k="note" />
      <Tool $more>
        <Pipette size={32} color={ICON} />
      </Tool>
      <Tool>
        <FaHandPaper size={30} color={ICON} />
      </Tool>
      <SvgTool k="zoom" />
    </ToolGroup>
    <ColorArea>
      <SmallDefault width="26" height="26" viewBox="0 0 26 26">
        <rect x="0" y="0" width="18" height="18" fill="#ddd" stroke="#aaa" />
        <path d="M2 16 L16 2" stroke="#cc1a1a" strokeWidth="1.5" />
        <rect x="9" y="9" width="16" height="16" fill="#000" stroke="#aaa" />
        <rect x="13" y="13" width="8" height="8" fill="#666" />
      </SmallDefault>
      <SwapIcon width="24" height="24" viewBox="0 0 24 24" fill={ICON}>
        <path d="M0 6 L7 0 V4 Q18 4 18 15 H22 L16 23 L10 15 H14 Q14 8 7 8 V12Z" />
      </SwapIcon>
      <BigFill>
        <NoneSwatch size={36} />
      </BigFill>
      <BigStroke />
    </ColorArea>
    <FormatRow>
      <FormatBtn>
        <FormatBox />
      </FormatBtn>
      <FormatT>T</FormatT>
    </FormatRow>
    <WideBtn $mt={9}>
      <svg width="36" height="28" viewBox="0 0 36 28">
        <rect width="36" height="28" fill="#fff" stroke="#aaa" />
        <path d="M2 26 L34 2" stroke="#cc1a1a" strokeWidth="3" />
      </svg>
    </WideBtn>
    <ModeBtn>
      <Ico w={30} h={20}>
        <rect x="10" y="6" width="20" height="14" />
        <path d="M12 1 V4 M18 1 V4 M24 1 V4 M29 1 V4 M1 10 H8 M4 14 H8 M1 18 H7" {...line} />
      </Ico>
    </ModeBtn>
    <WideBtn $mt={12}>
      <Ico w={28} h={22}>
        <rect x="1" y="1" width="26" height="20" fill="#747474" stroke={ICON} strokeWidth="2" />
      </Ico>
    </WideBtn>
  </ToolPanel>
);

const H_LABELS = [250, 200, 150, 100, 50, 0, 50, 100, 150, 200, 250, 300, 350, 400, 450, 500, 550, 600, 650, 700, 750, 800, 850, 900, ''];
const V_LABELS = [50, 0, 50, 100, 150, 200, 250, 300, 350, 400, 450, 500, 550, 600, 650];

const DockItem = ({ label, active, children }: { label: string; active?: boolean; children: React.ReactNode }) => (
  <DockRow $active={active}>
    <DockGlyph viewBox="0 0 34 34">{children}</DockGlyph>
    {label}
  </DockRow>
);

const StyleSquares = () => (
  <>
    <rect x="1" y="20" width="11" height="9" fill="none" stroke={ICON} strokeWidth="2" />
    <rect x="6" y="24" width="10" height="9" />
  </>
);

const DockPanel = () => (
  <Dock>
    <DockHead>&#171;</DockHead>
    <DockGroup $top={19}>
      <GripBars />
      <DockItem label="Pages" active>
        <path d="M1 12 L8 5 V11 H15 V31 H1Z M19 11 H26 V5 L33 12 V31 H19Z" />
        <path d="M17 0 V34" stroke={ICON} strokeWidth="2" />
      </DockItem>
      <DockItem label="Layers">
        <path d="M17 2 L32 11 L17 21 L2 11Z" />
        <path d="M6 18 L17 25 L28 18 L32 21 L17 31 L2 21Z" />
      </DockItem>
      <DockItem label="Swatches">
        <rect x="1" y="6" width="30" height="21" fill="#7e7e7e" stroke={ICON} strokeWidth="2" />
        <path d="M11 6 V27 M21 6 V27 M1 16 H31" stroke={ICON} strokeWidth="2" />
        <rect x="12" y="7" width="8" height="8" />
        <rect x="22" y="17" width="8" height="9" />
      </DockItem>
      <DockItem label="CC Libraries">
        <path d="M4 27 V3 H26" fill="none" stroke={ICON} strokeWidth="2" />
        <rect x="7" y="6" width="23" height="26" fill="none" stroke={ICON} strokeWidth="2" />
        <path d="M17 6 H27 V21 L22 17 L17 21Z" />
      </DockItem>
    </DockGroup>
    <DockGroup $top={19}>
      <GripBars />
      <DockItem label="Glyphs">
        <text x="0" y="29" fontFamily="Liberation Serif, serif" fontStyle="italic" fontSize="40" stroke="none">
          A
        </text>
      </DockItem>
      <DockItem label="Text Wrap">
        <path d="M0 5 H33 M0 9 H33 M0 15 H9 M24 15 H33 M0 20 H9 M24 20 H33 M0 26 H33 M0 30 H33" stroke={ICON} strokeWidth="1.5" />
        <circle cx="17" cy="17" r="8" />
      </DockItem>
    </DockGroup>
    <DockGroup $top={19}>
      <GripBars />
      <DockItem label="Stroke">
        <rect x="0" y="6" width="33" height="2" />
        <rect x="0" y="14" width="33" height="4" />
        <rect x="0" y="23" width="33" height="6" />
      </DockItem>
      <DockItem label="Gradient">
        <defs>
          <linearGradient id="dockGrad">
            <stop offset="0" stopColor="#222" />
            <stop offset="1" stopColor="#eee" />
          </linearGradient>
        </defs>
        <rect x="1" y="6" width="31" height="21" fill="url(#dockGrad)" stroke={ICON} strokeWidth="2" />
      </DockItem>
    </DockGroup>
    <DockGroup $top={19}>
      <GripBars />
      <DockItem label="Story">
        <rect x="2" y="1" width="29" height="32" />
        <text x="7" y="15" fontFamily="Liberation Serif, serif" fontWeight="700" fontSize="15" fill="#535353" stroke="none">
          T
        </text>
        <path d="M15 12 H26 M7 20 H26 M7 26 H26" stroke="#535353" strokeWidth="1.5" />
      </DockItem>
      <DockItem label="Hyperlinks">
        <circle cx="14" cy="14" r="13" />
        <path d="M8 4 Q12 10 5 14 M20 3 L16 10 L24 14" stroke="#535353" strokeWidth="2.5" fill="none" />
        <path d="M19 14 L22 13 L24 19 L33 22 L31 31 L22 33 L17 24 L21 23Z" stroke="#535353" strokeWidth="1.5" />
      </DockItem>
      <DockItem label="Effects">
        <text x="4" y="27" fontFamily="Liberation Sans, sans-serif" fontStyle="italic" fontSize="33" fill="#aaa" stroke="none">
          fx
        </text>
      </DockItem>
    </DockGroup>
    <DockGroup $top={19}>
      <GripBars />
      <DockItem label="Paragraph">
        <path d="M5 9 Q5 2 14 2 H17 V19 H14 Q5 19 5 9Z" />
        <path d="M19 2 H26 M19 2 V32 M24 2 V32" stroke={ICON} strokeWidth="2" />
      </DockItem>
      <DockItem label="Paragraph Styles">
        <path d="M13 8 Q13 2 21 2 H23 V16 H21 Q13 16 13 8Z" />
        <path d="M25 2 H30 M25 2 V25 M30 2 V25" stroke={ICON} strokeWidth="2" />
        <StyleSquares />
      </DockItem>
    </DockGroup>
    <DockGroup $top={19}>
      <GripBars />
      <DockItem label="Character">
        <text x="1" y="28" fontFamily="Liberation Sans, sans-serif" fontSize="31" fill="#b8b8b8" stroke="none">
          A
        </text>
        <path d="M29 0 V34" stroke={ICON} strokeWidth="2" />
      </DockItem>
      <DockItem label="Character Styles">
        <text x="13" y="21" fontFamily="Liberation Sans, sans-serif" fontSize="27" fill="#b8b8b8" stroke="none">
          A
        </text>
        <StyleSquares />
      </DockItem>
    </DockGroup>
  </Dock>
);

const ThumbA = () => (
  <text x="40" y="18" fontFamily="Liberation Sans, sans-serif" fontSize="17" fill="#111">
    A
  </text>
);
const thumbInk = { fill: 'none', stroke: '#c4c4c4', strokeWidth: 1 };
const thumbDisc = { fill: '#fff', stroke: '#c4c4c4', strokeWidth: 1 };
const NAVY = '#020c19';

const THUMBS: React.ReactNode[] = [
  <>
    <circle cx="23" cy="22" r="18" fill={NAVY} />
    <rect x="51" y="5" width="28" height="28" fill={NAVY} />
    <rect x="41" y="38" width="12" height="27" fill={NAVY} />
    <ThumbA />
  </>,
  <>
    <circle cx="22" cy="19" r="17" {...thumbDisc} />
    <circle cx="19" cy="27" r="18" {...thumbDisc} />
    <circle cx="27" cy="41" r="20" {...thumbDisc} />
    <circle cx="40" cy="47" r="19" {...thumbDisc} />
    <circle cx="52" cy="44" r="19" {...thumbDisc} />
    <circle cx="62" cy="32" r="18" {...thumbDisc} />
    <circle cx="71" cy="18" r="18" {...thumbDisc} />
    <ThumbA />
  </>,
  <>
    <path d="M60 0 V27 H90 M0 37 H29 V66" {...thumbInk} />
  </>,
  <>
    <rect x="57" y="4" width="29" height="27" transform="rotate(9 71 17)" {...thumbInk} strokeDasharray="2 1" />
    <path d="M0 37 H29 V66" {...thumbInk} />
    <ThumbA />
  </>,
  <>
    <rect x="1" y="1" width="30" height="65" fill={NAVY} />
    <rect x="84" y="55" width="5" height="10" fill={NAVY} />
    <ThumbA />
  </>,
];

const PagesFloat = () => (
  <PagesPanel>
    <PanelStrip />
    <PanelTabs>
      <PanelTab $w={118} $active>
        <ChevSvg width="10" height="16" viewBox="0 0 10 16" stroke="#ccc">
          <path d="M1 6 L5 1 L9 6 M1 10 L5 15 L9 10" />
        </ChevSvg>
        Pages
      </PanelTab>
      <PanelTab $w={70}>Laye</PanelTab>
      <PanelTab $w={69}>Swat</PanelTab>
      <PanelTab $w={73}>CC Li</PanelTab>
      <PanelTools>
        <ChevSvg width="18" height="14" viewBox="0 0 18 14" stroke="#d8d8d8">
          <path d="M1 1 L7 7 L1 13 M9 1 L15 7 L9 13" />
        </ChevSvg>
        <TabsRule />
        <Hamburger />
      </PanelTools>
    </PanelTabs>
    <Parents>
      <ParentRow>
        <ParentName>[None]</ParentName>
        <ParentThumb $c="#fff" />
      </ParentRow>
      <ParentRow>
        <ParentName>A&#8211;Parent</ParentName>
        <ParentThumb $c="#8fbcf0" />
      </ParentRow>
    </Parents>
    <PageList>
      <Triangle />
      {THUMBS.map((t, i) => (
        <PageTile key={i}>
          <Thumb viewBox="0 0 90 66">{t}</Thumb>
          <PageNum $on={i === 4}>
            <span>{i + 1}</span>
          </PageNum>
        </PageTile>
      ))}
      <DragCursor width="32" height="38" viewBox="0 0 32 38">
        <rect x="1" y="1" width="21" height="26" fill="#e4e4e4" stroke="#000" strokeWidth="1.5" />
        <path d="M11 23 Q11 14 19 15 L26 16 Q31 19 30 26 Q29 36 19 36 Q12 35 11 23Z" fill="#e8e8e8" stroke="#000" strokeWidth="1.5" />
      </DragCursor>
    </PageList>
    <PanelFoot>
      5 Pages in 5 Spreads
      <FootIcons>
        <Ico w={36} h={22}>
          <path d="M1 21 V9 H10 M12 21 H1 M13 1 H24 L30 7 V21 H13Z" {...line} stroke="#bdbdbd" />
          <path d="M17 8 L24 16" {...line} stroke="#bdbdbd" />
        </Ico>
        <ChevSvg width="22" height="22" viewBox="0 0 22 22" stroke="#c8c8c8">
          <rect x="1" y="1" width="20" height="20" />
          <path d="M11 6 V16 M6 11 H16" />
        </ChevSvg>
        <ChevSvg width="22" height="24" viewBox="0 0 22 24" stroke="#7e7e7e">
          <path d="M1 5 H21 M8 5 V1 H14 V5 M3 5 V23 H19 V5 M8 9 V20 M11 9 V20 M14 9 V20" />
        </ChevSvg>
      </FootIcons>
    </PanelFoot>
    <GripBars $h={12} />
  </PagesPanel>
);

const Status = () => (
  <StatusBar>
    <StatusItem $ml={29} $w={66}>110,19!</StatusItem>
    <StatusItem $ml={10}>
      <Chev dir="down" s={14} />
    </StatusItem>
    <StatusItem $ml={25}>
      <Ico w={16} h={20}>
        <rect x="0" y="1" width="2" height="18" />
        <path d="M15 1 V19 L5 10Z" />
      </Ico>
    </StatusItem>
    <StatusItem $ml={25}>
      <Ico w={12} h={20}>
        <path d="M11 1 V19 L1 10Z" />
      </Ico>
    </StatusItem>
    <PageField>
      <FieldValue $pad={6}>5</FieldValue>
      <DropCap $line>
        <Chev dir="down" s={14} />
      </DropCap>
    </PageField>
    <StatusItem $ml={22}>
      <Ico w={12} h={20} dim>
        <path d="M1 1 V19 L11 10Z" />
      </Ico>
    </StatusItem>
    <StatusItem $ml={27}>
      <Ico w={16} h={20} dim>
        <path d="M1 1 V19 L11 10Z" />
        <rect x="13" y="1" width="2" height="18" />
      </Ico>
    </StatusItem>
    <StatusItem $ml={30}>
      <Ico w={32} h={26}>
        <path d="M4 22 V10 Q5 2 12 3 Q19 3 20 11 V22" {...line} strokeWidth={4} />
        <path d="M12 7 V14 H19" {...line} />
        <path d="M27 23 H32 L29.5 26Z" />
      </Ico>
    </StatusItem>
    <StatusItem $ml={30} $w={149}>[Basic] (working)</StatusItem>
    <StatusItem $ml={43}>
      <Chev dir="down" s={14} />
    </StatusItem>
    <GreenDot />
    <StatusItem $ml={9} $w={85}>No errors</StatusItem>
    <StatusItem $ml={33}>
      <Chev dir="down" s={14} />
    </StatusItem>
    <HThumb />
    <StatusCorner>
      <SplitIcon />
      <svg width="18" height="18" viewBox="0 0 18 18" fill="#767676">
        {[[15, 2], [15, 6], [11, 6], [15, 10], [11, 10], [7, 10], [15, 14], [11, 14], [7, 14], [3, 14]].map(([x, y]) => (
          <rect key={`${x}-${y}`} x={x} y={y} width="2" height="2" />
        ))}
      </svg>
    </StatusCorner>
  </StatusBar>
);

export default function App() {
  return (
    <>
      <GlobalStyle />
      <GradientDefs width="0" height="0">
        <defs>
          <linearGradient id="toolGrad">
            <stop offset="0" stopColor="#2a2a2a" />
            <stop offset="1" stopColor="#d8d8d8" />
          </linearGradient>
          <linearGradient id="toolGradV" x1="0" y1="0" x2="0" y2="1">
            <stop offset="0" stopColor="#9a9a9a" />
            <stop offset="1" stopColor="#333" />
          </linearGradient>
        </defs>
      </GradientDefs>
      <Screen>
        <AppWindow>
          <TitleBar>
            <Light $c="#ec6a5e" $dot />
            <Light $c="#f4bf4f" />
            <Light $c="#61c554" />
            <Home viewBox="0 0 34 30">
              <path d="M17 0 L34 15 H29 V30 H20 V19 H14 V30 H5 V15 H0Z" />
            </Home>
            <AppTitle>Adobe InDesign 2023</AppTitle>
            <ShareBtn>Share</ShareBtn>
            <BarRule $ml={10} />
            <WorkspaceName>Typography</WorkspaceName>
            <Chev dir="down" s={16} />
            <BarRule $ml={27} />
            <SearchBox>
              <SearchGlyph size={26} color="#4a8ae8" />
              Adobe Stock
            </SearchBox>
          </TitleBar>
          <Controls />
          <Workspace>
            <Tools />
            <Main>
              <TabBar>
                <DocTab $w={500} $pad={28} $gap={52}>
                  <span>&#215;</span>
                  <span>Moodboard.indd @ 129% [GPU Preview]</span>
                </DocTab>
                <DocTab $active $w={558} $pad={26} $gap={17}>
                  <span>&#215;</span>
                  <span>*Shapes and patterns.indd @ 110% [GPU Preview]</span>
                </DocTab>
              </TabBar>
              <RulerRow>
                <RulerCorner />
                <HRuler>
                  {H_LABELS.map((l, i) => (
                    <HCell key={i}>{l}</HCell>
                  ))}
                </HRuler>
              </RulerRow>
              <CanvasRow>
                <VRulerCol>
                  <VRuler>
                    {V_LABELS.map((l, i) => (
                      <VCell key={i}>
                        {String(l)
                          .split('')
                          .map((d, j) => (
                            <span key={j}>{d}</span>
                          ))}
                      </VCell>
                    ))}
                  </VRuler>
                  <VRulerFoot />
                </VRulerCol>
                <Canvas>
                  <Page>
                    <DarkShape $w={661} $h={1401} />
                    <DarkShape $w={112} $h={240} />
                  </Page>
                </Canvas>
                <VScroll>
                  <VThumb />
                </VScroll>
              </CanvasRow>
              <Status />
            </Main>
            <DockGap />
            <DockPanel />
            <PagesFloat />
          </Workspace>
        </AppWindow>
        <RedEdge />
        <OrangeDot />
        <Watermark>
          <svg width="100" height="68" viewBox="0 0 100 68" fill="#c60000">
            <path d="M0 33 L22 0 L49 36 L77 0 L100 33 L74 68 H27Z" />
          </svg>
        </Watermark>
      </Screen>
    </>
  );
}
